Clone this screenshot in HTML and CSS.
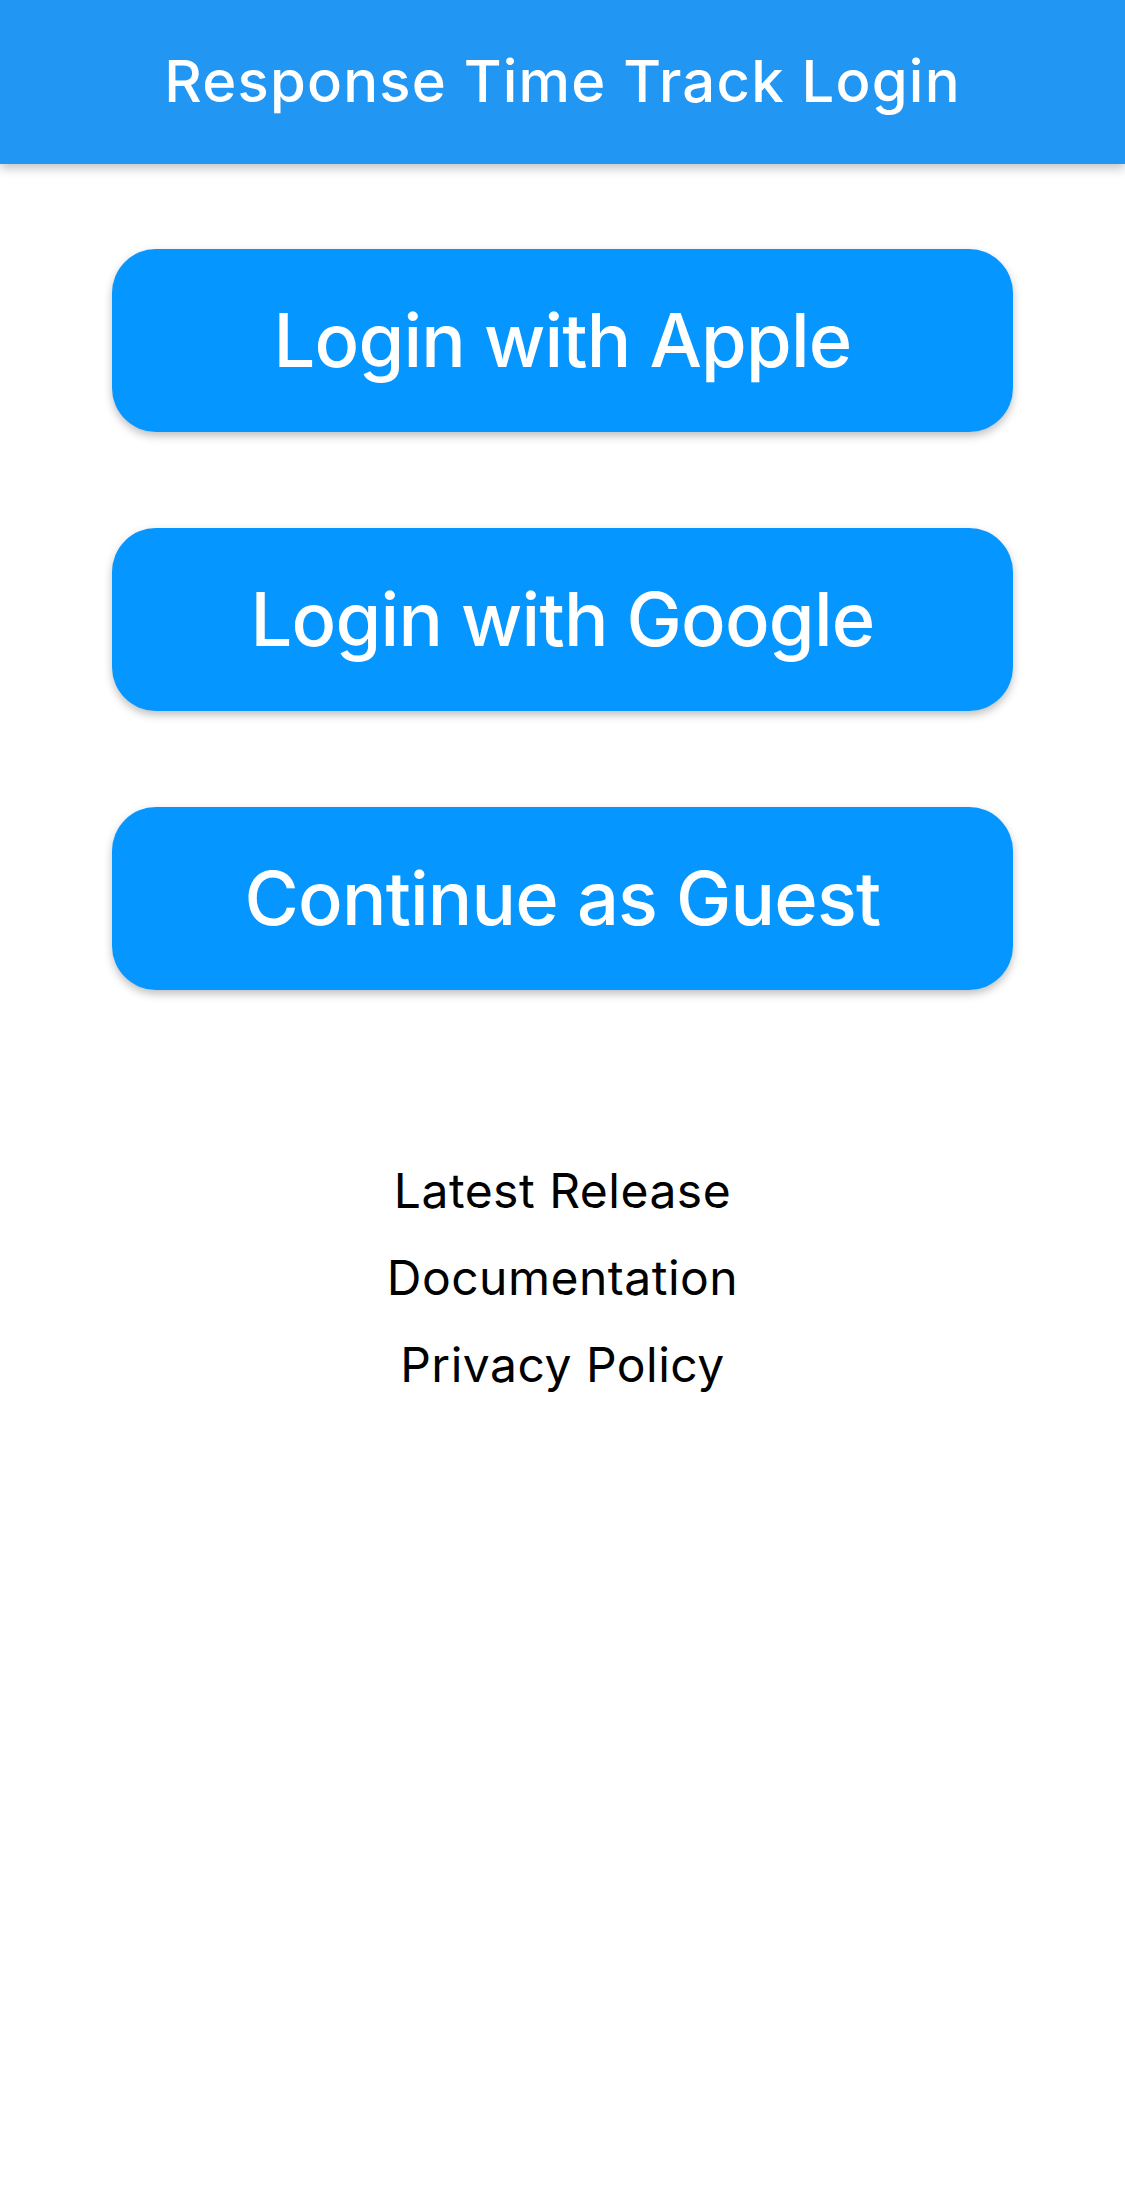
FILE: index.html
```html
<!DOCTYPE html>
<html lang="en">
<head>
<meta charset="utf-8">
<title>Response Time Track Login</title>
<link rel="stylesheet" href="styles.css">
</head>
<body>
<header class="appbar">
  <h1 class="appbar-title">Response Time Track Login</h1>
</header>
<main class="content">
  <div class="buttons">
    <button class="login-btn">Login with Apple</button>
    <button class="login-btn">Login with Google</button>
    <button class="login-btn">Continue as Guest</button>
  </div>
  <nav class="links">
    <a class="link" href="#">Latest Release</a>
    <a class="link" href="#">Documentation</a>
    <a class="link" href="#">Privacy Policy</a>
  </nav>
</main>
</body>
</html>
```
FILE: styles.css
```css
html, body {
  margin: 0;
  padding: 0;
  background: #ffffff;
}
body {
  font-family: Inter, "Noto Sans", Roboto, sans-serif;
  width: 1125px;
  min-height: 2200px;
}
.appbar {
  height: 164px;
  background: #2196f3;
  display: flex;
  align-items: center;
  justify-content: center;
  box-shadow: 0 4px 10px rgba(0, 0, 0, 0.25);
  position: relative;
  z-index: 1;
}
.appbar-title {
  margin: 0 0 2px 0;
  color: #ffffff;
  font-size: 58px;
  font-weight: 500;
  line-height: 1;
  letter-spacing: 1.2px;
}
.content {
  display: flex;
  flex-direction: column;
  align-items: center;
}
.buttons {
  margin-top: 85px;
  display: flex;
  flex-direction: column;
  gap: 96px;
}
.login-btn {
  width: 901px;
  height: 183px;
  border: none;
  border-radius: 44px;
  background: #0596ff;
  color: #ffffff;
  font-family: inherit;
  font-size: 74px;
  font-weight: 500;
  letter-spacing: -0.8px;
  display: flex;
  align-items: center;
  justify-content: center;
  box-shadow: 0 4px 8px rgba(0, 0, 0, 0.25);
  cursor: pointer;
  padding: 0 0 2px 0;
}
.links {
  margin-top: 157px;
  display: flex;
  flex-direction: column;
  align-items: center;
}
.link {
  color: #000000;
  text-decoration: none;
  font-size: 48px;
  line-height: 87px;
  letter-spacing: 0.5px;
}
```
